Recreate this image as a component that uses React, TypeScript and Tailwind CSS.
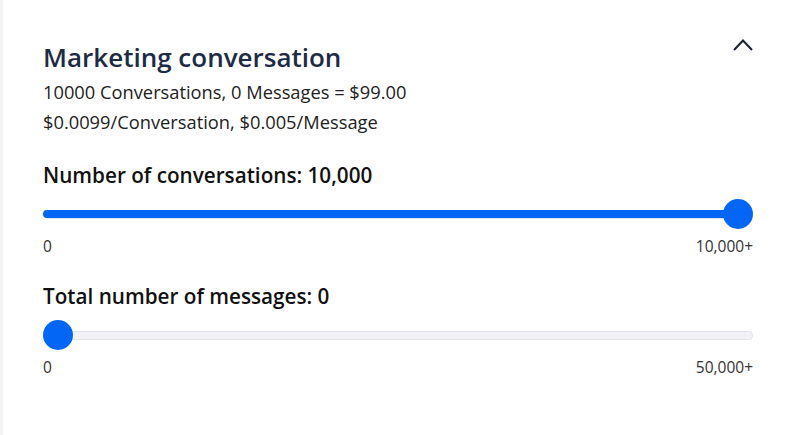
import React from "react";

const FONT = { fontFamily: '"Open Sans", "Noto Sans", Arial, sans-serif' };

function RangeRow({
  label,
  value,
  max,
  maxLabel,
}: {
  label: string;
  value: number;
  max: number;
  maxLabel: string;
}) {
  const pct = (value / max) * 100;
  return (
    <div>
      <p className="text-[20.7px] font-semibold leading-[28px] text-[#111]">{label}</p>
      {/* Slider */}
      <div className="relative mt-[10px] h-[30px]">
        <div className="absolute left-0 right-0 top-[10.5px] h-[9px] rounded-full border border-[#e2e2ea] bg-[#f2f2f6]" />
        <div
          className="absolute left-0 top-[11px] h-[8px] rounded-full bg-[#0466f5]"
          style={{ width: `calc(${pct}% - 15px)` }}
        />
        <div
          className="absolute top-0 h-[30px] w-[30px] rounded-full bg-[#0466f5]"
          style={{ left: `calc(${pct}% - ${(pct / 100) * 30}px)` }}
        />
      </div>
      <div className="mt-[7px] flex justify-between text-[15.5px] leading-[20px] text-[#333]">
        <span>0</span>
        <span>{maxLabel}</span>
      </div>
    </div>
  );
}

export default function App() {
  return (
    <div className="flex min-h-[435px] w-full bg-white" style={FONT}>
      <div className="w-[3px] shrink-0 bg-[#f3f3f3]" />
      <div className="flex-1 pl-[40px] pr-[39px] pt-[39px]">
        {/* Header */}
        <div className="flex items-start justify-between">
          <div>
            <h2 className="mt-[1px] text-[26px] font-semibold leading-[34px] text-[#1d2b44]">
              Marketing conversation
            </h2>
            <p className="mt-[3px] text-[18.3px] leading-[30px] text-[#222]">
              10000 Conversations, 0 Messages = $99.00
            </p>
            <p className="text-[18.3px] leading-[30px] text-[#222]">
              $0.0099/Conversation, $0.005/Message
            </p>
          </div>
          <button className="mt-0 p-0" aria-label="Collapse">
            <svg width="20" height="12" viewBox="0 0 20 12" fill="none" className="block">
              <path d="M1 11L10 1.5L19 11" stroke="#1a2233" strokeWidth="2" />
            </svg>
          </button>
        </div>

        <div className="mt-[24px]">
          <RangeRow
            label="Number of conversations: 10,000"
            value={10000}
            max={10000}
            maxLabel="10,000+"
          />
        </div>
        <div className="mt-[26px]">
          <RangeRow
            label="Total number of messages: 0"
            value={0}
            max={50000}
            maxLabel="50,000+"
          />
        </div>
      </div>
    </div>
  );
}
